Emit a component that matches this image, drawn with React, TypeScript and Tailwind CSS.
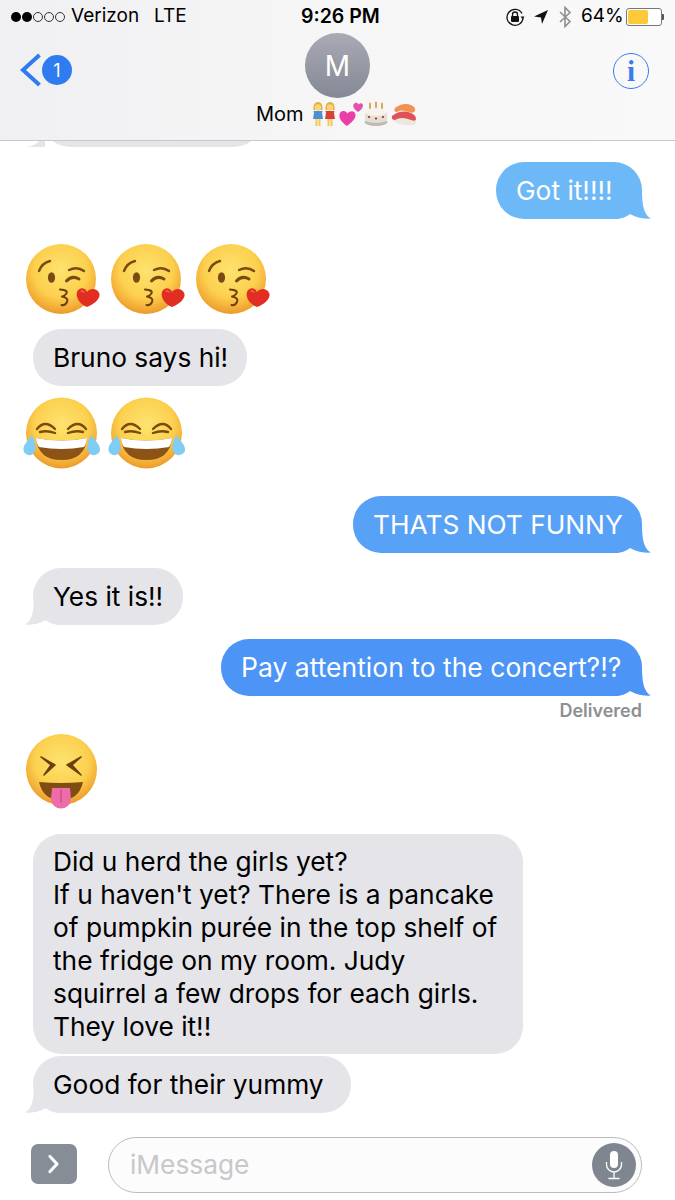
import { ReactNode } from "react";

function Tail({ side, fill }: { side: "left" | "right"; fill: string }) {
  if (side === "right") {
    return (
      <svg viewBox="0 0 38 28" className={`absolute bottom-0 right-[-9px] h-[28px] w-[38px] ${fill}`}>
        <path d="M29 0C29 14 31 24 38 27.6C32 28 24 27 17 23C13 26 8 28 1 28L1 0Z" />
      </svg>
    );
  }
  return (
    <svg viewBox="0 0 38 28" className={`absolute bottom-0 left-[-8px] h-[28px] w-[38px] ${fill}`}>
      <path d="M9 0C9 14 7 24 0 27.6C6 28 14 27 21 23C25 26 30 28 37 28L37 0Z" />
    </svg>
  );
}

function Bubble({
  children,
  side,
  bg,
  fill,
  tail = true,
  className = "",
}: {
  children: ReactNode;
  side: "left" | "right";
  bg: string;
  fill: string;
  tail?: boolean;
  className?: string;
}) {
  return (
    <div className={`relative whitespace-nowrap rounded-[28px] px-5 py-3 text-[26.3px] leading-[33px] ${bg} ${className}`}>
      {tail && <Tail side={side} fill={fill} />}
      <span className="relative">{children}</span>
    </div>
  );
}

function FaceDefs({ id }: { id: string }) {
  return (
    <defs>
      <radialGradient id={id} cx="50%" cy="38%" r="62%">
        <stop offset="0%" stopColor="#fde36f" />
        <stop offset="62%" stopColor="#fcd04e" />
        <stop offset="90%" stopColor="#f2a934" />
        <stop offset="100%" stopColor="#e99a2c" />
      </radialGradient>
    </defs>
  );
}

function KissEmoji() {
  return (
    <svg viewBox="0 0 75 72" className="h-[72px] w-[75px] shrink-0">
      <FaceDefs id="kissFace" />
      <circle cx="35" cy="35" r="35" fill="url(#kissFace)" />
      <path d="M13 27Q16 19 24 17" fill="none" stroke="#7a4a12" strokeWidth="2.4" strokeLinecap="round" />
      <ellipse cx="25.5" cy="33.5" rx="3.6" ry="5.2" fill="#7a4a12" />
      <path d="M40.5 37Q46 31 53 35" fill="none" stroke="#7a4a12" strokeWidth="3" strokeLinecap="round" />
      <path d="M43 26Q51 22 58 27" fill="none" stroke="#7a4a12" strokeWidth="2.4" strokeLinecap="round" />
      <path d="M34 45.5Q43 46 40 50Q38 52.5 36 52.5Q43 54 41 58Q39 62 35.5 61" fill="none" stroke="#6b3f10" strokeWidth="2" strokeLinecap="round" strokeLinejoin="round" />
      <path d="M61 63C55 61 49 54 51 48C53 43 59 43 61 48C65 43 72 45 73.5 50C74.5 55 67 61 61 63Z" fill="#e22d22" />
      <path d="M54 47C56 45.5 58 46.5 59 49C57 48 55.5 48 54 47Z" fill="#f56b52" />
    </svg>
  );
}

function LaughEmoji() {
  return (
    <svg viewBox="0 0 78 73" className="h-[73px] w-[78px] shrink-0">
      <FaceDefs id="laughFace" />
      <circle cx="38.5" cy="36" r="35.5" fill="url(#laughFace)" />
      <path d="M14 32Q22 22 32 32" fill="none" stroke="#7a4a12" strokeWidth="2.4" strokeLinecap="round" />
      <path d="M45 32Q55 22 63 32" fill="none" stroke="#7a4a12" strokeWidth="2.4" strokeLinecap="round" />
      <path d="M17 35Q24 33 32 36" fill="none" stroke="#7a4a12" strokeWidth="2.4" strokeLinecap="round" />
      <path d="M45 36Q53 33 60 35" fill="none" stroke="#7a4a12" strokeWidth="2.4" strokeLinecap="round" />
      <path d="M13 41Q38.5 46 64 41Q62 63 38.5 63Q15 63 13 41Z" fill="#8b5416" />
      <path d="M13 41Q38.5 46 64 41Q63.5 47 61 50Q38.5 54 16 50Q13.5 47 13 41Z" fill="#fff" />
      <path d="M9 38C6 43 0 47 0.5 53C1 58 8 60 11 56C14 52 12 44 9 38Z" fill="#7fcdf4" />
      <path d="M68 38C71 43 77.5 47 77 53C76.5 58 69 60 66 56C63 52 65 44 68 38Z" fill="#7fcdf4" />
    </svg>
  );
}

function TongueEmoji() {
  return (
    <svg viewBox="0 0 72 75" className="h-[75px] w-[72px] shrink-0">
      <FaceDefs id="tongueFace" />
      <circle cx="35.5" cy="35.5" r="35.5" fill="url(#tongueFace)" />
      <path d="M15 23L29 31L18 41L25 31Z" fill="#6b3f10" stroke="#6b3f10" strokeWidth="1.5" strokeLinejoin="round" />
      <path d="M55 23L41 31L55 41L46 31Z" fill="#6b3f10" stroke="#6b3f10" strokeWidth="1.5" strokeLinejoin="round" />
      <path d="M13 48Q35 50 57 48Q53 66 35 66Q17 66 13 48Z" fill="#7f4d14" />
      <path d="M26 54H44L45 65A10 9.5 0 0 1 25 65Z" fill="#ee6da9" />
      <path d="M35 56V68" stroke="#d14f8f" strokeWidth="1.5" strokeLinecap="round" />
    </svg>
  );
}

function GirlsEmoji() {
  return (
    <svg viewBox="0 0 28 26" className="h-[26px] w-[28px]">
      <path d="M3.5 9Q3 1 8 1Q13 1 12.5 9Z" fill="#e5ae3c" />
      <circle cx="8" cy="6.5" r="3.2" fill="#f9d676" />
      <path d="M3.5 10H12.5L12 12L13 18H3L4 12Z" fill="#4a8fd6" />
      <path d="M5.5 18H7.5V25H5.5ZM8.5 18H10.5V25H8.5Z" fill="#f6c84e" />
      <path d="M15.5 9Q15 1 20 1Q25 1 24.5 9Z" fill="#e5ae3c" />
      <circle cx="20" cy="6.5" r="3.2" fill="#f9d676" />
      <path d="M15.5 10H24.5L24 12L25 18H15L16 12Z" fill="#d8413a" />
      <path d="M17.5 18H19.5V25H17.5ZM20.5 18H22.5V25H20.5Z" fill="#f6c84e" />
    </svg>
  );
}

function HeartsEmoji() {
  return (
    <svg viewBox="0 0 26 26" className="h-[26px] w-[26px]">
      <path d="M9 25C3 21 0 16 2 12C4 9 8 9.5 9.5 12.5C12 9 17 9.5 17.5 13.5C18 18 13 22 9 25Z" fill="#ea3fa6" />
      <path d="M20 11C17 9 14.5 6 15.5 3.5C17 1 19.5 1.5 20.5 3.5C22 1.5 25 2 25 4.5C25 7 22.5 9.5 20 11Z" fill="#e84fb0" />
    </svg>
  );
}

function CakeEmoji() {
  return (
    <svg viewBox="0 0 24 26" className="h-[26px] w-[24px]">
      <path d="M6 3V10M12 2V9M18 3V10" stroke="#c29a3f" strokeWidth="1.6" />
      <circle cx="6" cy="2.5" r="1" fill="#e8a33a" />
      <circle cx="12" cy="1.5" r="1" fill="#e8a33a" />
      <circle cx="18" cy="2.5" r="1" fill="#e8a33a" />
      <ellipse cx="12" cy="21" rx="11.5" ry="4" fill="#bdb9b3" />
      <path d="M1 11H23V20Q12 24 1 20Z" fill="#e4ded3" />
      <ellipse cx="12" cy="11" rx="11" ry="4" fill="#f7f3ec" />
      <circle cx="5" cy="16" r="1.1" fill="#8c2f3e" />
      <circle cx="12" cy="17.5" r="1.1" fill="#8c2f3e" />
      <circle cx="19" cy="16" r="1.1" fill="#8c2f3e" />
    </svg>
  );
}

function SushiEmoji() {
  return (
    <svg viewBox="0 0 26 24" className="h-[24px] w-[26px]">
      <ellipse cx="14" cy="19" rx="11.5" ry="4" fill="#eee7dc" transform="rotate(8 14 19)" />
      <path d="M1 14Q10 7 20 11Q25 13 25 17Q25 20 20 18Q10 14 4 18Q0 18 1 14Z" fill="#e0525a" />
      <path d="M4 6Q12 0 20 3Q25 5 24 9Q22 12 18 10Q10 7 6 10Q2 10 4 6Z" fill="#f29152" />
    </svg>
  );
}

function StatusBar() {
  return (
    <div className="flex h-[33px] items-center pl-[11px] pr-[9px] text-[19px] text-black">
      <div className="flex w-[60px] items-center gap-[1px]">
        <span className="h-[10px] w-[10px] rounded-full bg-black" />
        <span className="h-[10px] w-[10px] rounded-full bg-black" />
        <span className="h-[10px] w-[10px] rounded-full border border-[#333]" />
        <span className="h-[10px] w-[10px] rounded-full border border-[#333]" />
        <span className="h-[10px] w-[10px] rounded-full border border-[#333]" />
      </div>
      <span className="w-[83px]">Verizon</span>
      <span className="w-[147px]">LTE</span>
      <span className="w-[204px] text-[19.5px] font-semibold">9:26 PM</span>
      <div className="flex items-center">
        <svg viewBox="0 0 20 20" className="mr-[8px] h-[20px] w-[20px]">
          <path d="M17 6.5A8 8 0 1 0 18 10" fill="none" stroke="#111" strokeWidth="1.3" />
          <path d="M15.5 9.5H19.5L17.5 12Z" fill="#111" />
          <rect x="6" y="9" width="8" height="6" rx="1" fill="#111" />
          <path d="M7.5 9V7.5A2.5 2.5 0 0 1 12.5 7.5V9" fill="none" stroke="#111" strokeWidth="1.3" />
        </svg>
        <svg viewBox="0 0 16 16" className="mr-[9px] h-[16px] w-[16px]">
          <path d="M15 1L1 7.5L8 8.5L9 15Z" fill="#111" />
        </svg>
        <svg viewBox="0 0 14 22" className="mr-[9px] h-[22px] w-[14px]">
          <path d="M2 6L12 15.5L7 20.5V1.5L12 6.5L2 16" fill="none" stroke="#8e8e93" strokeWidth="1.6" />
        </svg>
        <span className="w-[45px]">64%</span>
        <div className="flex items-center">
          <div className="h-[18px] w-[36px] rounded-[3px] border border-[#777] bg-white p-[1px]">
            <div className="h-full w-[64%] rounded-[2px] bg-[#fdc93b]" />
          </div>
          <div className="h-[6px] w-[2px] rounded-r-[1px] bg-[#555]" />
        </div>
      </div>
    </div>
  );
}

function Header() {
  return (
    <div className="relative h-[141px] shrink-0 border-b border-[#c8c8cc] bg-gradient-to-r from-[#f0f0f2] via-[#f6f6f7] to-[#f9f9fa]">
      <StatusBar />
      <div className="flex items-start justify-between pl-[20px] pr-[26px]">
        <div className="mt-[20px] flex items-center">
          <svg viewBox="0 0 22 34" className="h-[34px] w-[22px]">
            <path d="M19.5 2L3 17L19.5 32" fill="none" stroke="#2f7bf0" strokeWidth="4" />
          </svg>
          <div className="flex h-[30px] w-[30px] items-center justify-center rounded-full bg-[#2f7bf0] text-[18px] text-white">
            1
          </div>
        </div>
        <div className="mt-[20px] flex h-[36px] w-[36px] items-center justify-center rounded-full border-[1.5px] border-[#3b7bef] font-['Liberation_Serif',serif] text-[29px] font-bold leading-none text-[#3b7bef]">
          i
        </div>
      </div>
      <div className="absolute left-[305px] top-[33px] flex h-[65px] w-[65px] items-center justify-center rounded-full bg-gradient-to-b from-[#a8abb4] to-[#858996] text-[28px] text-white">
        M
      </div>
      <div className="absolute left-[256px] top-[101px] flex h-[26px] items-center text-[20px] text-black">
        <span className="mr-[6px]">Mom</span>
        <GirlsEmoji />
        <HeartsEmoji />
        <CakeEmoji />
        <span className="w-[3px]" />
        <SushiEmoji />
      </div>
    </div>
  );
}

export default function App() {
  const grayBg = "bg-[#e4e4e9] text-black";
  const grayFill = "fill-[#e4e4e9]";
  return (
    <div className="flex h-[1200px] w-[675px] flex-col overflow-hidden bg-white font-['Inter','Liberation_Sans',sans-serif]">
      <Header />

      <div className="flex flex-1 flex-col px-[33px]">
        <div className="relative h-[6px] w-[229px] self-start pl-[9px]">
          <div className="h-[6px] overflow-hidden">
            <div className="-mt-[51px] h-[57px] w-[220px] rounded-[28px] bg-[#e4e4e9]" />
          </div>
          <svg viewBox="0 0 20 6" className="absolute left-[-8px] top-0 h-[6px] w-[20px] fill-[#e4e4e9]">
            <path d="M0 6C6 6 11 3 14 0H20V6Z" />
          </svg>
        </div>

        <Bubble side="right" bg="bg-[#6db9f7] text-white" fill="fill-[#6db9f7]" className="mt-[15px] w-[146px] self-end">
          Got it!!!!
        </Bubble>

        <div className="-ml-[7px] mt-[25px] flex gap-[10px]">
          <KissEmoji />
          <KissEmoji />
          <KissEmoji />
        </div>

        <Bubble side="left" bg={grayBg} fill={grayFill} tail={false} className="mt-[13px] w-[214px] self-start">
          Bruno says hi!
        </Bubble>

        <div className="-ml-[10px] mt-[11px] flex gap-[7px]">
          <LaughEmoji />
          <LaughEmoji />
        </div>

        <Bubble side="right" bg="bg-[#57a1f7] text-white" fill="fill-[#57a1f7]" className="mt-[26px] w-[289px] self-end">
          THATS NOT FUNNY
        </Bubble>

        <Bubble side="left" bg={grayBg} fill={grayFill} className="mt-[15px] w-[150px] self-start">
          Yes it is!!
        </Bubble>

        <Bubble side="right" bg="bg-[#4c94f5] text-white" fill="fill-[#4c94f5]" className="mt-[14px] w-[421px] self-end !text-[26.5px]">
          Pay attention to the concert?!?
        </Bubble>

        <div className="mt-[6px] self-end text-[18px] font-semibold leading-[18px] text-[#8e8e93]">Delivered</div>

        <div className="-ml-[7px] mt-[14px] flex">
          <TongueEmoji />
        </div>

        <Bubble side="left" bg={grayBg} fill={grayFill} tail={false} className="mt-[25px] w-[490px] !py-[11px]">
          Did u herd the girls yet?
          <br />
          If u haven't yet? There is a pancake
          <br />
          of pumpkin purée in the top shelf of
          <br />
          the fridge on my room. Judy
          <br />
          squirrel a few drops for each girls.
          <br />
          They love it!!
        </Bubble>

        <Bubble side="left" bg={grayBg} fill={grayFill} className="mt-[2px] w-[318px] self-start">
          Good for their yummy
        </Bubble>
      </div>

      <div className="flex h-[87px] shrink-0 items-start pl-[31px] pr-[33px] pt-[24px]">
        <div className="mt-[7px] flex h-[40px] w-[46px] items-center justify-center rounded-[7px] bg-[#878d96]">
          <svg viewBox="0 0 14 20" className="h-[20px] w-[14px]">
            <path d="M3 2.5L10 10L3 17.5" fill="none" stroke="#fff" strokeWidth="3.2" strokeLinecap="round" strokeLinejoin="round" />
          </svg>
        </div>
        <div className="ml-[31px] flex h-[56px] flex-1 items-center justify-between rounded-[28px] border border-[#bcbcc0] bg-[#fcfcfc] pl-[21px] pr-[5px]">
          <span className="text-[26.3px] text-[#c7c7cc]">iMessage</span>
          <div className="flex h-[44px] w-[44px] items-center justify-center rounded-full bg-[#808690]">
            <svg viewBox="0 0 20 30" className="h-[30px] w-[20px]">
              <rect x="6" y="1" width="8" height="17" rx="4" fill="#fff" />
              <path d="M2.5 12V14.5A7.5 7.5 0 0 0 17.5 14.5V12M10 22V28M4.5 28.5H15.5" fill="none" stroke="#fff" strokeWidth="1.3" />
            </svg>
          </div>
        </div>
      </div>
    </div>
  );
}
